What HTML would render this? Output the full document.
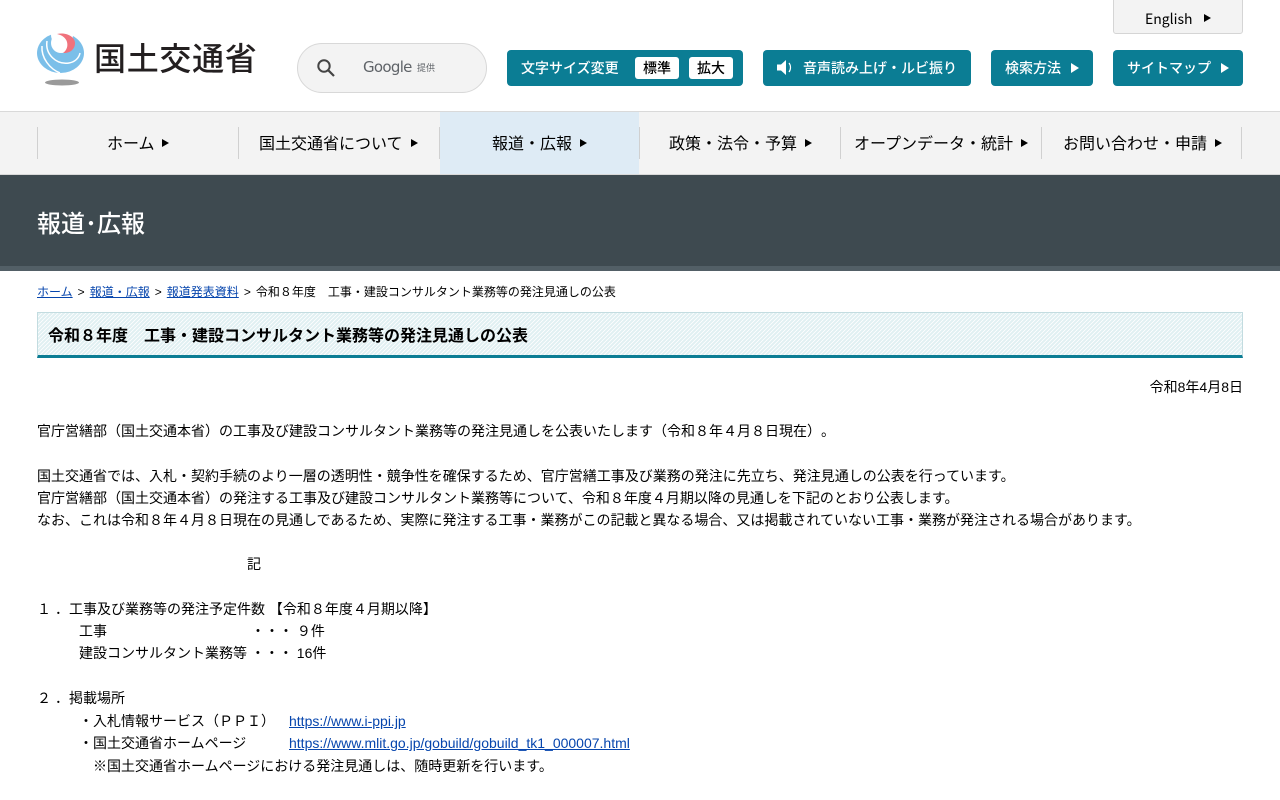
<!DOCTYPE html>
<html lang="ja"><head><meta charset="utf-8"><title>令和8年度 工事・建設コンサルタント業務等の発注見通しの公表</title>
<style>
*{box-sizing:border-box}
html,body{margin:0;padding:0;background:#fff;width:1280px;height:800px;overflow:hidden}
body{position:relative;font-family:"Liberation Sans","Noto Sans CJK JP",sans-serif;font-size:14px;color:#000;text-spacing-trim:space-all;font-feature-settings:"chws" 0}
.a{position:absolute;white-space:pre}
.n{font-family:"Noto Sans CJK JP",sans-serif}
.btn{position:absolute;top:50px;height:36px;background:#0b7d94;border-radius:4px;color:#fff;font:500 14px/37px "Noto Sans CJK JP",sans-serif;white-space:nowrap}
.tri{position:absolute;width:0;height:0;border-style:solid;border-color:transparent transparent transparent #000}
.w{border-left-color:#fff}
.sub{position:absolute;top:7px;height:22px;width:44px;background:#fff;border-radius:3px;color:#000;font:500 14px/23px "Noto Sans CJK JP",sans-serif;text-align:center}
.sep{position:absolute;top:127px;width:1px;height:32px;background:#d0d0d0}
.nav{position:absolute;top:129px;font:400 16px/26px "Noto Sans CJK JP",sans-serif;color:#000;white-space:nowrap;text-align:center}
a{color:#0645ad}
.l{position:absolute;left:37px;height:22px;line-height:22px;white-space:pre}
.g{padding:0 1.7px}
</style></head><body>
<svg class="a" style="left:36px;top:32px" width="50" height="56" viewBox="0 0 50 56">
<ellipse cx="26" cy="50.500" rx="17" ry="3" fill="#9a9a9a"/>
<ellipse cx="24.500" cy="21" rx="23.500" ry="20" fill="#7bbfe9"/>
<circle cx="26" cy="3" r="11" fill="#fff"/>
<path d="M6 14C5 26 14 37 24 41" fill="none" stroke="#fff" stroke-width="1.500"/>
<path d="M11 9C9 22 20 33 33 31 39 30 43 26 44 21" fill="none" stroke="#fff" stroke-width="1.500"/>
<circle cx="25" cy="11" r="10" fill="#fff"/>
<path d="M21 2C29 0 39 4 39 11 39 18 33 21.500 27 21 31 18 32 14 31 10 30 6 26 3 21 2Z" fill="#f0727c"/>
</svg>
<div class="a n" style="left:94px;top:33px;font-size:32px;line-height:48px;font-weight:500;color:#231f20;letter-spacing:.7px">国土交通省</div>

<div class="a" style="left:297px;top:43px;width:190px;height:50px;border:1px solid #d8d8d8;border-radius:25px;background:#f3f3f3"></div>
<svg class="a" style="left:315px;top:57px" width="22" height="22" viewBox="0 0 22 22"><circle cx="9" cy="9" r="5.700" fill="none" stroke="#444" stroke-width="2"/><path d="M13.200 13.200L19 19" stroke="#444" stroke-width="2.200"/></svg>
<div class="a" style="left:363px;top:56px;font-size:15px;line-height:22px;color:#5f6368;font-family:'DejaVu Sans',sans-serif;letter-spacing:-.7px">Google</div>
<div class="a n" style="left:417px;top:60px;font-size:9px;line-height:16px;color:#5f6368">提供</div>

<div class="a" style="left:1113px;top:-4px;width:130px;height:38px;background:#f3f3f3;border:1px solid #d5d5d5;border-radius:3px"></div>
<div class="a n" style="left:1145px;top:9px;font-size:14px;line-height:20px;font-weight:400;color:#000">English</div>
<div class="tri" style="left:1204px;top:14px;border-width:4px 0 4px 7px"></div>

<div class="btn" style="left:507px;width:236px"><span class="a" style="left:14px;top:0">文字サイズ変更</span><div class="sub" style="left:128px">標準</div><div class="sub" style="left:182px">拡大</div></div>
<div class="btn" style="left:763px;width:208px"><svg class="a" style="left:13px;top:9px" width="20" height="17" viewBox="0 0 20 17"><path d="M1 5.500H5L10 1V16L5 11.500H1Z" fill="#fff"/><path d="M13 4C15 6.500 15 10.500 13 13" fill="none" stroke="#fff" stroke-width="1.200"/></svg><span class="a" style="left:40px;top:0">音声読み上げ・ルビ振り</span></div>
<div class="btn" style="left:991px;width:102px"><span class="a" style="left:14px;top:0">検索方法</span><div class="tri w" style="left:80px;top:13px;border-width:5px 0 5px 8px"></div></div>
<div class="btn" style="left:1113px;width:130px"><span class="a" style="left:14px;top:0">サイトマップ</span><div class="tri w" style="left:108px;top:13px;border-width:5px 0 5px 8px"></div></div>

<div class="a" style="left:0;top:111px;width:1280px;height:64px;background:#f3f3f3;border-top:1px solid #d9d9d9;border-bottom:1px solid #d9d9d9"></div>
<div class="a" style="left:440px;top:112px;width:199px;height:62px;background:#deebf5"></div>
<div class="sep" style="left:37px"></div><div class="sep" style="left:238px"></div><div class="sep" style="left:439px"></div><div class="sep" style="left:639px"></div><div class="sep" style="left:840px"></div><div class="sep" style="left:1041px"></div><div class="sep" style="left:1241px"></div>
<div class="nav" style="left:107px">ホーム</div><div class="tri" style="left:162px;top:139px;border-width:4px 0 4px 7px"></div>
<div class="nav" style="left:259px">国土交通省について</div><div class="tri" style="left:411px;top:139px;border-width:4px 0 4px 7px"></div>
<div class="nav" style="left:492px">報道・広報</div><div class="tri" style="left:580px;top:139px;border-width:4px 0 4px 7px"></div>
<div class="nav" style="left:669px">政策・法令・予算</div><div class="tri" style="left:805px;top:139px;border-width:4px 0 4px 7px"></div>
<div class="nav" style="left:854px">オープンデータ・統計</div><div class="tri" style="left:1021px;top:139px;border-width:4px 0 4px 7px"></div>
<div class="nav" style="left:1063px">お問い合わせ・申請</div><div class="tri" style="left:1215px;top:139px;border-width:4px 0 4px 7px"></div>

<div class="a" style="left:0;top:175px;width:1280px;height:96px;background:#3e4a50;border-bottom:5px solid #525f66"></div>
<div class="a n" style="left:37px;top:202px;font-size:24px;line-height:40px;color:#fff;font-weight:500;letter-spacing:0">報道･広報</div>

<div class="a" style="left:37px;top:283px;font-size:12px;line-height:18px"><a href="#">ホーム</a><span class="g"> &gt; </span><a href="#">報道・広報</a><span class="g"> &gt; </span><a href="#">報道発表資料</a><span class="g"> &gt; </span>令和８年度　工事・建設コンサルタント業務等の発注見通しの公表</div>

<svg class="a" style="left:38px;top:313px" width="1204" height="42"><defs><pattern id="h" width="4" height="4" patternUnits="userSpaceOnUse"><rect width="4" height="4" fill="#e0f0f2"/><path d="M-1 1L1 -1M0 4L4 0M3 5L5 3" stroke="#fff" stroke-width=".8"/></pattern></defs><rect width="1204" height="42" fill="url(#h)"/></svg>
<div class="a" style="left:37px;top:312px;width:1206px;height:46px;border:1px solid #c3dce0;border-bottom:3px solid #0b7d94"></div>
<div class="a" style="left:48px;top:325px;font-size:16px;line-height:24px;font-weight:700">令和８年度　工事・建設コンサルタント業務等の発注見通しの公表</div>

<div class="a" style="right:37px;top:376px;line-height:22px">令和8年4月8日</div>
<div class="l" style="top:420px">官庁営繕部（国土交通本省）の工事及び建設コンサルタント業務等の発注見通しを公表いたします（令和８年４月８日現在）。</div>
<div class="l" style="top:465px">国土交通省では、入札・契約手続のより一層の透明性・競争性を確保するため、官庁営繕工事及び業務の発注に先立ち、発注見通しの公表を行っています。</div>
<div class="l" style="top:487px">官庁営繕部（国土交通本省）の発注する工事及び建設コンサルタント業務等について、令和８年度４月期以降の見通しを下記のとおり公表します。</div>
<div class="l" style="top:509px">なお、これは令和８年４月８日現在の見通しであるため、実際に発注する工事・業務がこの記載と異なる場合、又は掲載されていない工事・業務が発注される場合があります。</div>
<div class="l" style="top:553px;left:247px">記</div>
<div class="l" style="top:598px">１</div><div class="l" style="top:598px;left:55px">．</div><div class="l" style="top:598px;left:69px">工事及び業務等の発注予定件数 【令和８年度４月期以降】</div>
<div class="l" style="top:620px;left:79px">工事</div><div class="l" style="top:620px;left:251px">・・・ ９件</div>
<div class="l" style="top:642px;left:79px">建設コンサルタント業務等 ・・・ 16件</div>
<div class="l" style="top:687px">２</div><div class="l" style="top:687px;left:55px">．</div><div class="l" style="top:687px;left:69px">掲載場所</div>
<div class="l" style="top:710px;left:79px">・入札情報サービス（ＰＰＩ）</div><div class="l" style="top:710px;left:289px"><a href="#">https://www.i-ppi.jp</a></div>
<div class="l" style="top:732px;left:79px">・国土交通省ホームページ</div><div class="l" style="top:732px;left:289px"><a href="#">https://www.mlit.go.jp/gobuild/gobuild_tk1_000007.html</a></div>
<div class="l" style="top:755px;left:93px">※国土交通省ホームページにおける発注見通しは、随時更新を行います。</div>
</body></html>
